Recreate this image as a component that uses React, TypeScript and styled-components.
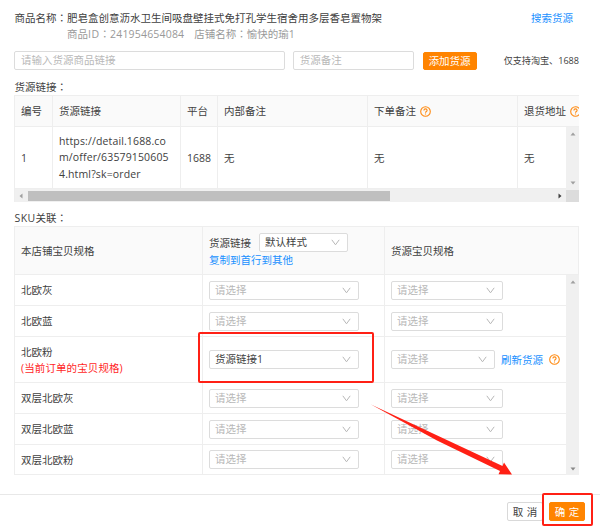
import React from "react";
import styled, { createGlobalStyle } from "styled-components";

const GlobalStyle = createGlobalStyle`
  * { box-sizing: border-box; }
  body {
    margin: 0;
    background: #fff;
    color: #404040;
    font-family: "Open Sans", "Noto Sans CJK SC", sans-serif;
    font-size: 10.5px;
    line-height: 16px;
  }
`;

const Dialog = styled.main`
  position: relative;
  width: 600px;
  height: 530px;
  overflow: hidden;
  display: flex;
  flex-direction: column;
`;

const Content = styled.div`
  height: 494px;
  width: 579px;
  padding: 10px 0 0 14px;
  white-space: nowrap;
`;

const TitleRow = styled.div`
  display: flex;
  justify-content: space-between;
  padding: 0 6px 0 0.5px;
  height: 16px;
`;

const ColonMark = styled.span`
  font-family: "Noto Sans CJK TC", sans-serif;
`;

const MetaRow = styled.div`
  display: flex;
  gap: 10px;
  height: 17px;
  padding-left: 53px;
  color: #999;
`;

const Latin = styled.span<{ $spacing: number }>`
  letter-spacing: ${(p) => p.$spacing}px;
`;

const Link = styled.a`
  color: #1890ff;
`;

const SearchLink = styled(Link)`
  line-height: 17px;
`;

const AddRow = styled.div`
  display: flex;
  align-items: center;
  height: 19px;
  margin-top: 8px;
`;

const TextField = styled.div<{ $width: number }>`
  width: ${(p) => p.$width}px;
  height: 19px;
  margin-right: 8px;
  padding-left: 6px;
  border: 1px solid #dcdcdc;
  border-radius: 2px;
  line-height: 17px;
  color: #b8b8b8;
`;

const Button = styled.button<{ $primary?: boolean; $width: number; $spaced?: boolean }>`
  width: ${(p) => p.$width}px;
  height: ${(p) => (p.$spaced ? 19 : 18)}px;
  padding: 0;
  border: 1px solid ${(p) => (p.$primary ? "#ff8400" : "#d9d9d9")};
  border-radius: 2px;
  background: ${(p) => (p.$primary ? "#ff8400" : "#fff")};
  color: ${(p) => (p.$primary ? "#fff" : "#404040")};
  font: inherit;
  line-height: 16px;
  word-spacing: ${(p) => (p.$spaced ? "0.6px" : "0")};
`;

const Hint = styled.span`
  margin-left: 27px;
  font-size: 9.1px;
`;

const SectionLabel = styled.div<{ $top: number; $height: number }>`
  margin-top: ${(p) => p.$top}px;
  height: ${(p) => p.$height}px;
  padding-left: 0.5px;
`;

const SourceTable = styled.div`
  width: 565px;
  height: 107px;
  overflow: hidden;
  border-top: 1px solid #eee;
  border-left: 1px solid #eee;
`;

const SourceRow = styled.div<{ $head?: boolean }>`
  display: grid;
  grid-template-columns: 38px 128px 37px 150px 150px 1fr;
  height: ${(p) => (p.$head ? 31 : 62)}px;
  background: ${(p) => (p.$head ? "#fafafa" : "#fff")};
`;

const Cell = styled.div<{ $last?: boolean }>`
  display: flex;
  align-items: center;
  padding-left: 6px;
  border-bottom: 1px solid #eee;
  border-right: ${(p) => (p.$last ? "none" : "1px solid #eee")};
`;

const UrlCell = styled(Cell)`
  line-height: 16.5px;
  letter-spacing: 0.14px;
`;

const BodyArea = styled.div`
  display: grid;
  grid-template-columns: 1fr 13px;
`;

const VerticalTrack = styled.div`
  display: flex;
  flex-direction: column;
  justify-content: space-between;
  align-items: center;
  padding: 4px 0 3px;
  background: #f0f0f0;
`;

const HorizontalTrack = styled.div`
  display: flex;
  align-items: center;
  height: 13px;
  padding-top: 1px;
  background: #f0f0f0;
`;

const Thumb = styled.div`
  width: 362px;
  height: 10px;
  margin-left: 4px;
  background: #bfbfbf;
`;

const Corner = styled.div`
  width: 13px;
  height: 12px;
  margin-left: auto;
  background: #dcdcdc;
`;

const ArrowSlot = styled.span<{ $left: number }>`
  display: flex;
  margin-left: ${(p) => p.$left}px;
`;

const SkuTable = styled.div`
  width: 565px;
  border-top: 1px solid #eee;
  border-left: 1px solid #eee;
`;

const SkuHead = styled.div`
  display: grid;
  grid-template-columns: 188px 182px 1fr;
  height: 48px;
  background: #fafafa;
  border-right: 1px solid #eee;
`;

const SkuRow = styled.div<{ $height: number }>`
  display: grid;
  grid-template-columns: 188px 182px 1fr;
  height: ${(p) => p.$height}px;
`;

const LinkHead = styled(Cell)`
  flex-direction: column;
  align-items: flex-start;
  justify-content: center;
`;

const InlineGroup = styled.div`
  display: flex;
  align-items: center;
  gap: 8px;
`;

const SkuName = styled.div`
  display: flex;
  flex-direction: column;
`;

const CurrentTag = styled.span`
  color: #ff1f1f;
  letter-spacing: 0.1px;
`;

const SelectBox = styled.div<{ $width: number; $filled?: boolean }>`
  display: flex;
  align-items: center;
  justify-content: space-between;
  width: ${(p) => p.$width}px;
  height: 19px;
  padding: 0 7px 0 5px;
  border: 1px solid #dcdcdc;
  border-radius: 2px;
  background: #fff;
  color: ${(p) => (p.$filled ? "#404040" : "#b8b8b8")};
  line-height: 17px;
`;

const RefreshGroup = styled.div`
  display: flex;
  align-items: center;
  gap: 6px;
`;

const Footer = styled.footer`
  display: flex;
  justify-content: flex-end;
  gap: 6px;
  height: 36px;
  padding: 7px 15px 0 0;
  border-top: 1px solid #e8e8e8;
`;

const Highlight = styled.div<{ $x: number; $y: number; $w: number; $h: number }>`
  position: absolute;
  left: ${(p) => p.$x}px;
  top: ${(p) => p.$y}px;
  width: ${(p) => p.$w}px;
  height: ${(p) => p.$h}px;
  border: 2px solid #ff2015;
  border-radius: 2px;
`;

const ArrowLayer = styled.svg`
  position: absolute;
  left: 365px;
  top: 398px;
`;

const HelpSvg = styled.svg<{ $gap: number }>`
  flex: none;
  margin-left: ${(p) => p.$gap}px;
`;

const Colon = () => <ColonMark>：</ColonMark>;

const Help = ({ gap = 3.5 }: { gap?: number }) => (
  <HelpSvg $gap={gap} width="11" height="11" viewBox="0 0 11 11" fill="none" stroke="#ff8a10">
    <circle cx="5.5" cy="5.5" r="4.8" strokeWidth="1.1" />
    <path d="M3.9 4.4c0-2 3.2-2 3.2 0 0 1.1-1.6 1.1-1.6 2.3M5.5 7.6v.9" strokeWidth="1.1" />
  </HelpSvg>
);

const Chevron = () => (
  <svg width="9" height="7" viewBox="0 0 9 7" fill="none" stroke="#b8b8b8">
    <path d="M0.8 0.8 4.5 5.8 8.2 0.8" />
  </svg>
);

const Triangle = ({ d, color }: { d: string; color: string }) => (
  <svg width="6" height="6" viewBox="0 0 6 6" fill={color}>
    <path d={d} />
  </svg>
);

const UP = "M0.5 4.5 3 1.5 5.5 4.5z";
const DOWN = "M0.5 1.5 3 4.5 5.5 1.5z";
const LEFT = "M4.5 0.5 1.5 3 4.5 5.5z";
const RIGHT = "M1.5 0.5 4.5 3 1.5 5.5z";

type SelectProps = { width: number; value?: string };
const Select = ({ width, value }: SelectProps) => (
  <SelectBox $width={width} $filled={!!value}>
    {value ?? "请选择"}
    <Chevron />
  </SelectBox>
);

const skus = [
  { name: "北欧灰", height: 31 },
  { name: "北欧蓝", height: 31 },
  { name: "北欧粉", height: 46, current: true },
  { name: "双层北欧灰", height: 31 },
  { name: "双层北欧蓝", height: 31 },
  { name: "双层北欧粉", height: 30 },
];

export default function App() {
  return (
    <Dialog>
      <GlobalStyle />
      <Content>
        <TitleRow>
          <span>
            商品名称
            <Colon />
            肥皂盒创意沥水卫生间吸盘壁挂式免打孔学生宿舍用多层香皂置物架
          </span>
          <SearchLink>搜索货源</SearchLink>
        </TitleRow>
        <MetaRow>
          <span>
            商品<Latin $spacing={0.5}>ID</Latin>
            <Colon />
            <Latin $spacing={0.18}>241954654084</Latin>
          </span>
          <span>
            店铺名称
            <Colon />
            愉快的瑜1
          </span>
        </MetaRow>
        <AddRow>
          <TextField $width={271}>请输入货源商品链接</TextField>
          <TextField $width={121}>货源备注</TextField>
          <ArrowSlot $left={1}>
            <Button $primary $width={54}>添加货源</Button>
          </ArrowSlot>
          <Hint>仅支持淘宝、1688</Hint>
        </AddRow>

        <SectionLabel $top={9} $height={16}>
          货源链接
          <Colon />
        </SectionLabel>
        <SourceTable>
          <SourceRow $head>
            <Cell>编号</Cell>
            <Cell>货源链接</Cell>
            <Cell>平台</Cell>
            <Cell>内部备注</Cell>
            <Cell>
              下单备注
              <Help />
            </Cell>
            <Cell $last>
              退货地址
              <Help />
            </Cell>
          </SourceRow>
          <BodyArea>
            <SourceRow>
              <Cell>1</Cell>
              <UrlCell>
                <span>
                  https://detail.1688.co
                  <br />
                  m/offer/63579150605
                  <br />
                  4.html?sk=order
                </span>
              </UrlCell>
              <Cell>1688</Cell>
              <Cell>无</Cell>
              <Cell>无</Cell>
              <Cell $last>无</Cell>
            </SourceRow>
            <VerticalTrack>
              <Triangle d={UP} color="#a0a0a0" />
              <Triangle d={DOWN} color="#a0a0a0" />
            </VerticalTrack>
          </BodyArea>
          <HorizontalTrack>
            <ArrowSlot $left={3}>
              <Triangle d={LEFT} color="#a0a0a0" />
            </ArrowSlot>
            <Thumb />
            <ArrowSlot $left={167}>
              <Triangle d={RIGHT} color="#404040" />
            </ArrowSlot>
            <Corner />
          </HorizontalTrack>
        </SourceTable>

        <SectionLabel $top={8} $height={16}>
          <Latin $spacing={0.4}>SKU</Latin>关联
          <Colon />
        </SectionLabel>
        <SkuTable>
          <SkuHead>
            <Cell>本店铺宝贝规格</Cell>
            <LinkHead>
              <InlineGroup>
                货源链接
                <Select width={89} value="默认样式" />
              </InlineGroup>
              <Link>复制到首行到其他</Link>
            </LinkHead>
            <Cell $last>货源宝贝规格</Cell>
          </SkuHead>
          <BodyArea>
            <div>
              {skus.map((sku) => (
                <SkuRow key={sku.name} $height={sku.height}>
                  <Cell>
                    <SkuName>
                      {sku.name}
                      {sku.current && <CurrentTag>(当前订单的宝贝规格)</CurrentTag>}
                    </SkuName>
                  </Cell>
                  <Cell>
                    <Select width={150} value={sku.current ? "货源链接1" : undefined} />
                  </Cell>
                  <Cell $last>
                    {sku.current ? (
                      <RefreshGroup>
                        <Select width={104} />
                        <Link>刷新货源</Link>
                        <Help gap={0} />
                      </RefreshGroup>
                    ) : (
                      <Select width={112} />
                    )}
                  </Cell>
                </SkuRow>
              ))}
            </div>
            <VerticalTrack>
              <Triangle d={UP} color="#a0a0a0" />
              <Triangle d={DOWN} color="#888" />
            </VerticalTrack>
          </BodyArea>
        </SkuTable>
      </Content>

      <Footer>
        <Button $width={36} $spaced>取 消</Button>
        <Button $primary $width={36} $spaced>确 定</Button>
      </Footer>

      <Highlight $x={198} $y={332} $w={176} $h={51} />
      <Highlight $x={542} $y={493} $w={51} $h={33} />
      <ArrowLayer width="152" height="82" viewBox="365 398 152 82" fill="#ff2015">
        <path d="M371 404.5 502.5 466 504 462.5 512 474.5 498.5 474.3 500 471 437 440.5z" />
      </ArrowLayer>
    </Dialog>
  );
}
